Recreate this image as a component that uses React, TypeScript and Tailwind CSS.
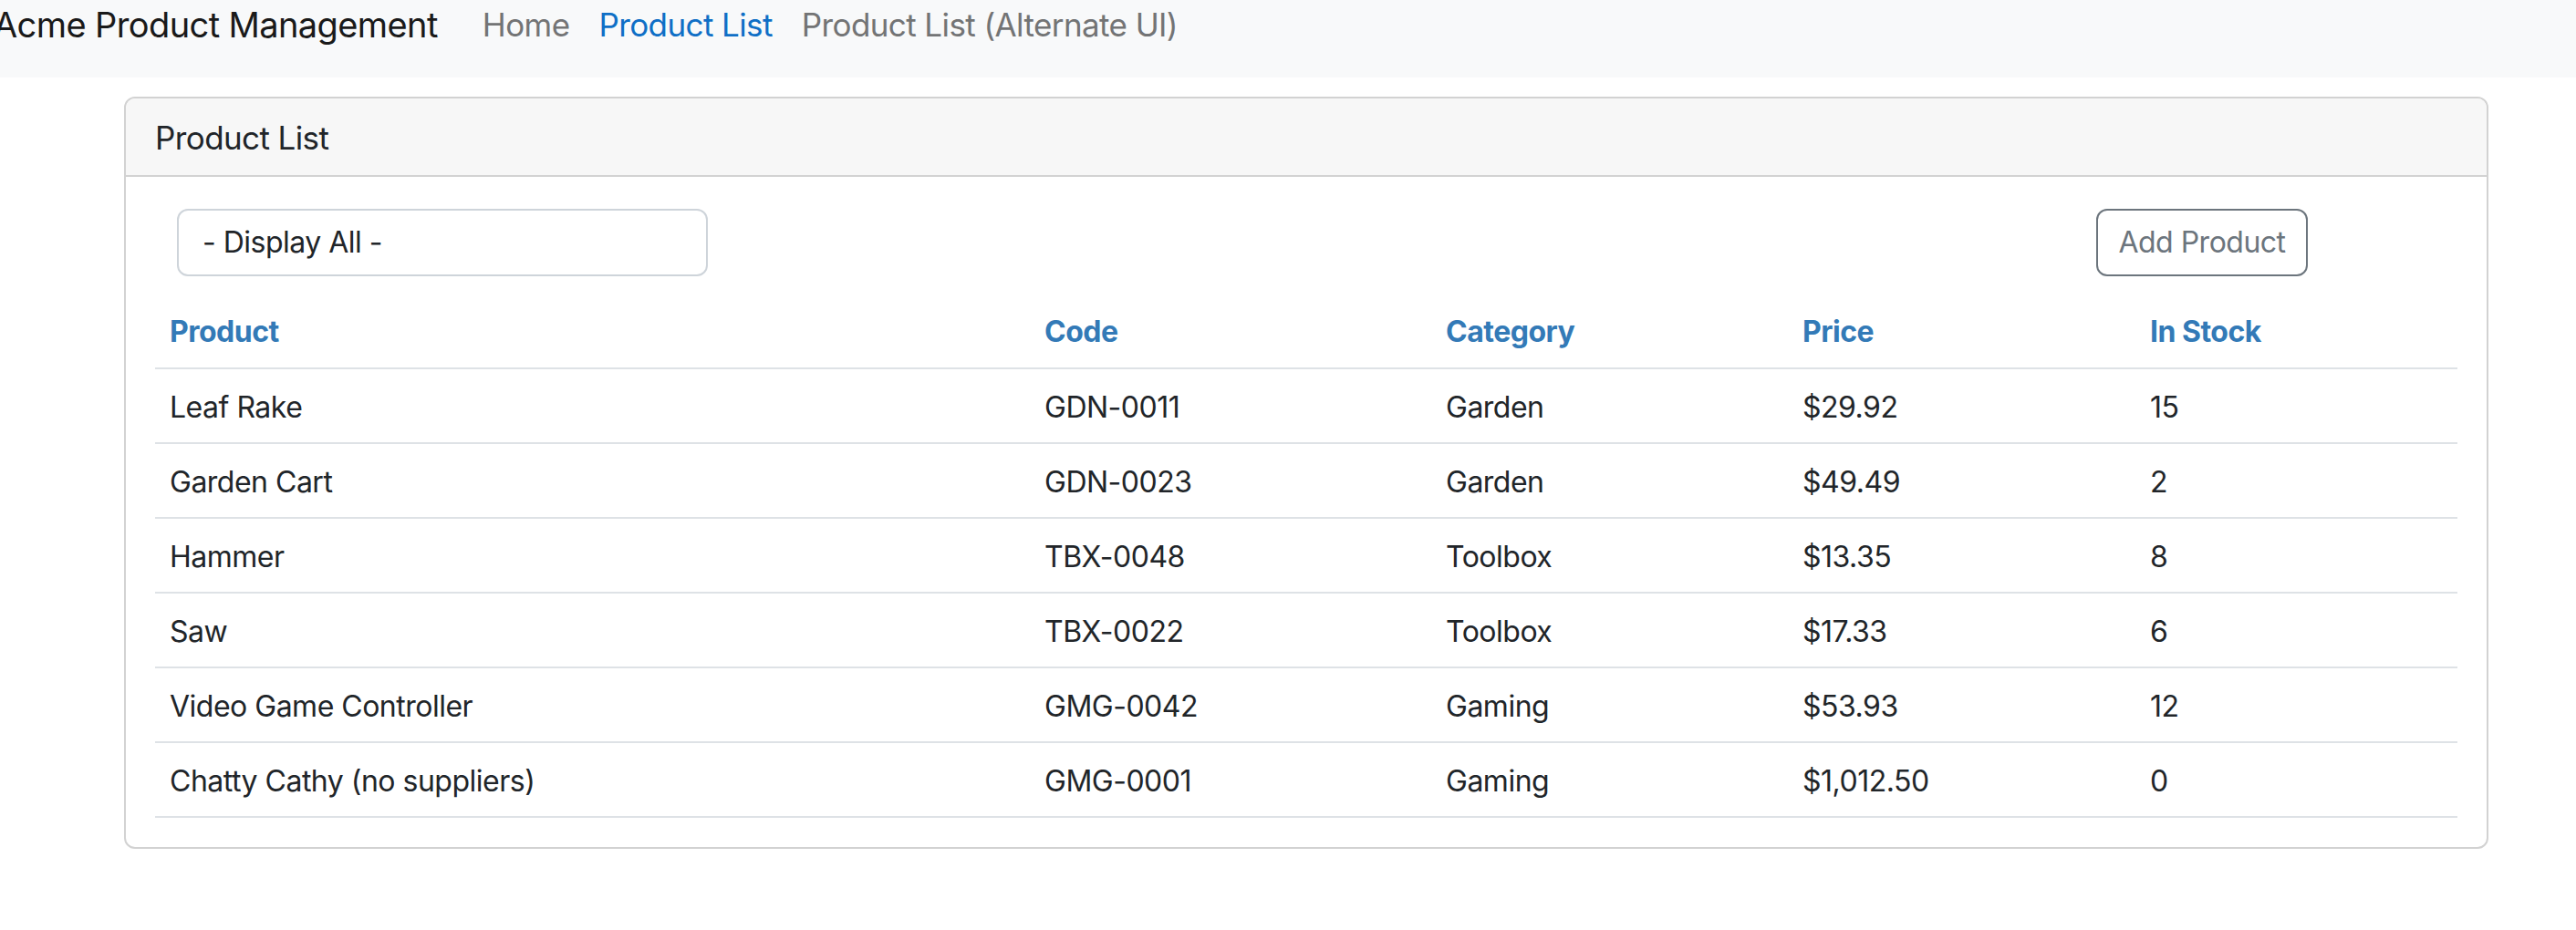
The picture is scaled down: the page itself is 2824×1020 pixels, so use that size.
import React from "react";

const rows = [
  ["Leaf Rake", "GDN-0011", "Garden", "$29.92", "15"],
  ["Garden Cart", "GDN-0023", "Garden", "$49.49", "2"],
  ["Hammer", "TBX-0048", "Toolbox", "$13.35", "8"],
  ["Saw", "TBX-0022", "Toolbox", "$17.33", "6"],
  ["Video Game Controller", "GMG-0042", "Gaming", "$53.93", "12"],
  ["Chatty Cathy (no suppliers)", "GMG-0001", "Gaming", "$1,012.50", "0"],
];

export default function App() {
  return (
    <div className="min-h-[1020px] bg-white text-[#212529] [font-family:Inter,'Noto_Sans',sans-serif] tracking-[-0.5px] overflow-hidden">
      <nav className="h-[85px] bg-[#f8f9fa]">
        <div className="flex h-[54px] items-center whitespace-nowrap">
          <span className="ml-[-7px] text-[38px] leading-none tracking-[-0.6px] text-[#1a1a1a]">Acme Product Management</span>
          <div className="ml-[33px] flex text-[35px] leading-none tracking-[-0.6px]">
            <a className="px-[16px] text-[#737475]">Home</a>
            <a className="px-[16px] text-[#0f6fc6]">Product List</a>
            <a className="px-[16px] text-[#737475]">Product List (Alternate UI)</a>
          </div>
        </div>
      </nav>
      <div className="ml-[136px] mt-[21px] w-[2592px] rounded-[12px] border-2 border-[#d2d2d2]">
        <div className="rounded-t-[10px] border-b-2 border-[#d2d2d2] bg-[#f7f7f7] px-[32px] pt-[19px] pb-[17px] text-[35px] leading-[48px] tracking-[-0.6px]">
          Product List
        </div>
        <div className="px-[32px] pt-[35px] pb-[32px] text-[32px] leading-[48px]">
          <div className="flex items-center">
            <div className="ml-[24px] flex h-[74px] w-[582px] items-center rounded-[12px] border-2 border-[#ced4da] px-[26px]">
              - Display All -
            </div>
            <button className="ml-[1522px] flex h-[74px] w-[232px] items-center justify-center rounded-[12px] border-2 border-[#6c757d] text-[#6c757d]">
              Add Product
            </button>
          </div>
          <table className="mt-[20px] w-full table-fixed border-collapse">
            <thead>
              <tr>
                <th className="w-[959px] border-b-2 border-[#dee2e6] px-[16px] pt-[17px] pb-[15px] text-left font-bold text-[#337ab7]">Product</th>
                <th className="w-[440px] border-b-2 border-[#dee2e6] px-[16px] pt-[17px] pb-[15px] text-left font-bold text-[#337ab7]">Code</th>
                <th className="w-[391px] border-b-2 border-[#dee2e6] px-[16px] pt-[17px] pb-[15px] text-left font-bold text-[#337ab7]">Category</th>
                <th className="w-[381px] border-b-2 border-[#dee2e6] px-[16px] pt-[17px] pb-[15px] text-left font-bold text-[#337ab7]">Price</th>
                <th className="border-b-2 border-[#dee2e6] px-[16px] pt-[17px] pb-[15px] text-left font-bold text-[#337ab7]">In Stock</th>
              </tr>
            </thead>
            <tbody>
              {rows.map((r) => (
                <tr key={r[1]}>
                  {r.map((c, i) => (
                    <td key={i} className="border-b-2 border-[#dee2e6] px-[16px] pt-[18px] pb-[14px] text-left">
                      {c}
                    </td>
                  ))}
                </tr>
              ))}
            </tbody>
          </table>
        </div>
      </div>
    </div>
  );
}
